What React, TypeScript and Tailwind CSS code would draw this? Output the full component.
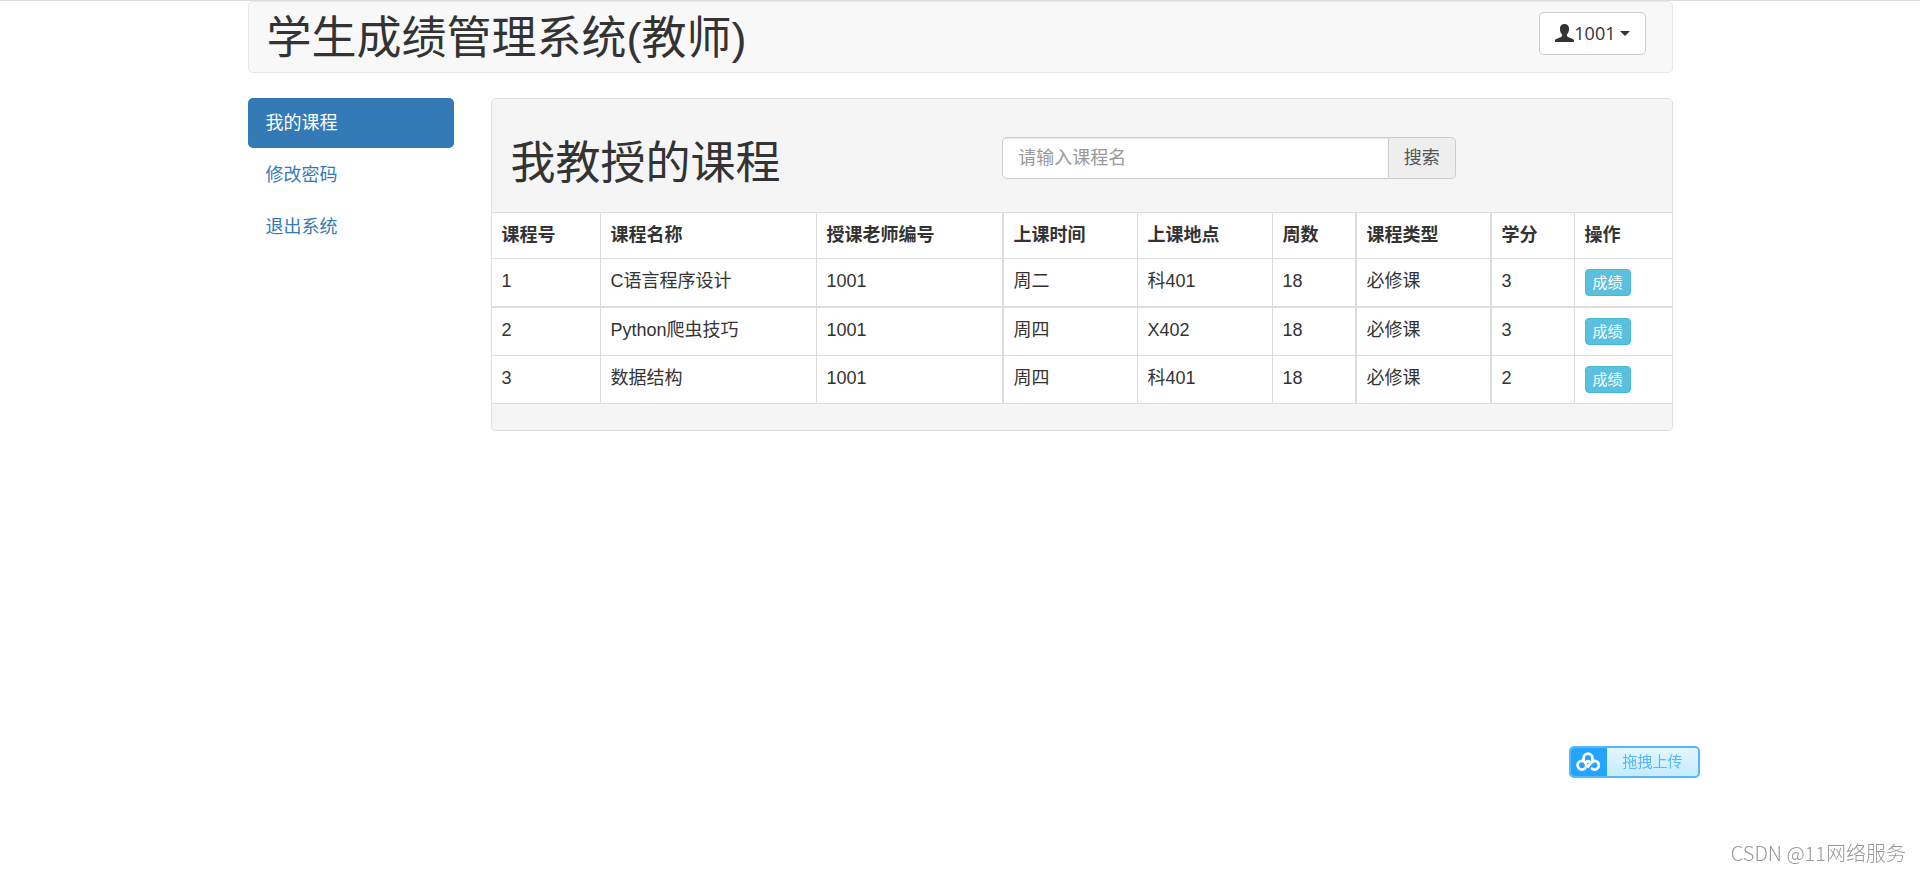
import React, { useState } from 'react'

const courses = [
  { id: 1, name: 'C语言程序设计', teacher: '1001', time: '周二', place: '科401', weeks: 18, type: '必修课', credit: 3 },
  { id: 2, name: 'Python爬虫技巧', teacher: '1001', time: '周四', place: 'X402', weeks: 18, type: '必修课', credit: 3 },
  { id: 3, name: '数据结构', teacher: '1001', time: '周四', place: '科401', weeks: 18, type: '必修课', credit: 2 },
]

const menu = ['我的课程', '修改密码', '退出系统']

const columns = [
  { title: '课程号', width: 'w-[109px]', border: 'border-r' },
  { title: '课程名称', width: 'w-[216px]', border: 'border-r' },
  { title: '授课老师编号', width: 'w-[187px]', border: 'border-r-2' },
  { title: '上课时间', width: 'w-[134px]', border: 'border-r' },
  { title: '上课地点', width: 'w-[135px]', border: 'border-r' },
  { title: '周数', width: 'w-[84px]', border: 'border-r-2' },
  { title: '课程类型', width: 'w-[135px]', border: 'border-r-2' },
  { title: '学分', width: 'w-[83px]', border: 'border-r' },
  { title: '操作', width: '', border: '' },
]

const UserIcon = () => (
  <svg className="mb-[2px] h-[18px] w-[19px]" viewBox="0 0 19 18" fill="currentColor" aria-hidden="true">
    <path d="M9.500 0C6.900 0 4.900 1.600 4.900 4.800c0 2.500 1 4.600 2.200 5.700v1.100c0 .6-.4 1-1 1.300L1.300 15C.4 15.400 0 16 0 16.800V18h19v-1.200c0-.8-.4-1.400-1.300-1.800l-4.800-2.100c-.6-.3-1-.7-1-1.300v-1.100c1.200-1.100 2.200-3.200 2.200-5.700C14.100 1.600 12.100 0 9.500 0z" />
  </svg>
)

const CloudLogo = () => (
  <svg className="h-5 w-6" viewBox="0 0 24 20" fill="none" stroke="#fff" strokeWidth="2.800" strokeLinecap="round" aria-hidden="true">
    <path d="M7.600 8V6a4.400 4.400 0 0 1 8.800 0v2" />
    <circle cx="5.900" cy="13.200" r="4.300" />
    <path d="M9.400 10.700Q12 7.800 14.600 10.700" />
    <path d="M12 14.500l3-3.600a4.300 4.300 0 1 1 1 5.800" />
  </svg>
)

const Header = () => (
  <header className="flex items-start justify-between rounded-[5px] border border-[#e7e7e7] bg-[#f8f8f8] pr-[26px] pl-[18px]">
    <h1 className="pt-[12px] pb-[8px] text-[45px] leading-[50px]">学生成绩管理系统(教师)</h1>
    <button
      type="button"
      className="mt-[10px] flex h-[43px] items-center rounded-[5px] border border-[#ccc] bg-white px-[15px] font-['Open_Sans','Noto_Sans_CJK_SC',sans-serif] text-[18px]"
    >
      <UserIcon />
      <span>1001</span>
      <span className="ml-[4px] border-x-[5px] border-t-[5px] border-x-transparent border-t-[#333]" />
    </button>
  </header>
)

const Sidebar = () => {
  const [active, setActive] = useState('我的课程')

  return (
    <nav>
      <ul className="flex flex-col gap-[2px]">
        {menu.map((item) => (
          <li key={item}>
            <a
              href="#"
              onClick={() => setActive(item)}
              className={
                item === active
                  ? 'block rounded-[5px] bg-[#337ab7] px-[18px] py-[12px] leading-[26px] text-white'
                  : 'block rounded-[5px] px-[18px] py-[12px] leading-[26px] text-[#337ab7]'
              }
            >
              {item}
            </a>
          </li>
        ))}
      </ul>
    </nav>
  )
}

const CourseTable = () => (
  <table className="w-full table-fixed border-separate border-spacing-0 text-left leading-[25px]">
    <thead>
      <tr>
        {columns.map((col) => (
          <th key={col.title} className={`${col.width} ${col.border} border-t border-[#ddd] p-[10px] font-bold`}>
            {col.title}
          </th>
        ))}
      </tr>
    </thead>
    <tbody>
      {courses.map((course, row) => {
        const top = row === 1 ? 'border-t-2' : 'border-t'
        const cells = [
          course.id, course.name, course.teacher, course.time, course.place,
          course.weeks, course.type, course.credit,
        ]
        return (
          <tr key={course.id}>
            {cells.map((cell, i) => (
              <td key={i} className={`${columns[i].border} ${top} border-[#ddd] p-[10px] align-top`}>
                {cell}
              </td>
            ))}
            <td className={`${top} border-[#ddd] p-[10px] align-top`}>
              <button
                type="button"
                className="block h-[27px] rounded-[4px] border border-[#46b8da] bg-[#5bc0de] px-[7px] text-[15px] leading-[25px] text-white"
              >
                成绩
              </button>
            </td>
          </tr>
        )
      })}
    </tbody>
  </table>
)

const App = () => {
  return (
    <div className="border-t border-[#ddd] bg-white font-['Liberation_Sans','Noto_Sans_CJK_SC',sans-serif] text-[18px] text-[#333]">
      <div className="mx-auto max-w-[1425px]">
        <Header />

        <div className="mt-[25px] grid grid-cols-[206px_1fr] gap-[37px]">
          <Sidebar />

          <main className="rounded-[5px] border border-[#ddd] shadow-[0_1px_1px_rgba(0,0,0,0.05)]">
            <div className="grid grid-cols-12 rounded-t-[4px] bg-[#f5f5f5]">
              <h2 className="col-span-5 px-[19px] pt-[40px] pb-[23px] text-[45px] leading-[50px]">我教授的课程</h2>
              <form className="col-span-5 flex px-[19px] pt-[38px]" onSubmit={(e) => e.preventDefault()}>
                <input
                  type="text"
                  aria-label="课程名"
                  placeholder="请输入课程名"
                  className="h-[42px] min-w-0 flex-1 rounded-l-[5px] border border-[#ccc] bg-white px-[15px] shadow-[inset_0_1px_1px_rgba(0,0,0,0.075)] outline-none placeholder:text-[#999]"
                />
                <button
                  type="submit"
                  className="h-[42px] rounded-r-[5px] border border-l-0 border-[#ccc] bg-[#eee] px-[15px] text-[#555]"
                >
                  搜索
                </button>
              </form>
            </div>
            <CourseTable />
            <div className="h-[27px] rounded-b-[4px] border-t border-[#ddd] bg-[#f5f5f5]" />
          </main>
        </div>
      </div>

      {/* 拖拽上传悬浮按钮 */}
      <button
        type="button"
        className="fixed right-[220px] bottom-[94px] flex h-[32px] w-[131px] overflow-hidden rounded-[5px] border-2 border-[#5ab6fb] bg-linear-to-b from-[#e3f6ff] to-[#c4ebff] text-[15px] text-[#5ab6fb]"
      >
        <span className="-my-[2px] -ml-[2px] flex h-[32px] w-[38px] items-center justify-center bg-[#22a4ff]">
          <CloudLogo />
        </span>
        <span className="flex-1 leading-[28px]">拖拽上传</span>
      </button>

      <p className="fixed right-[14px] bottom-[6px] font-['Noto_Sans_CJK_SC',sans-serif] text-[20px] leading-[26px] font-light text-[#999]">
        CSDN @11网络服务
      </p>
    </div>
  )
}

export default App
